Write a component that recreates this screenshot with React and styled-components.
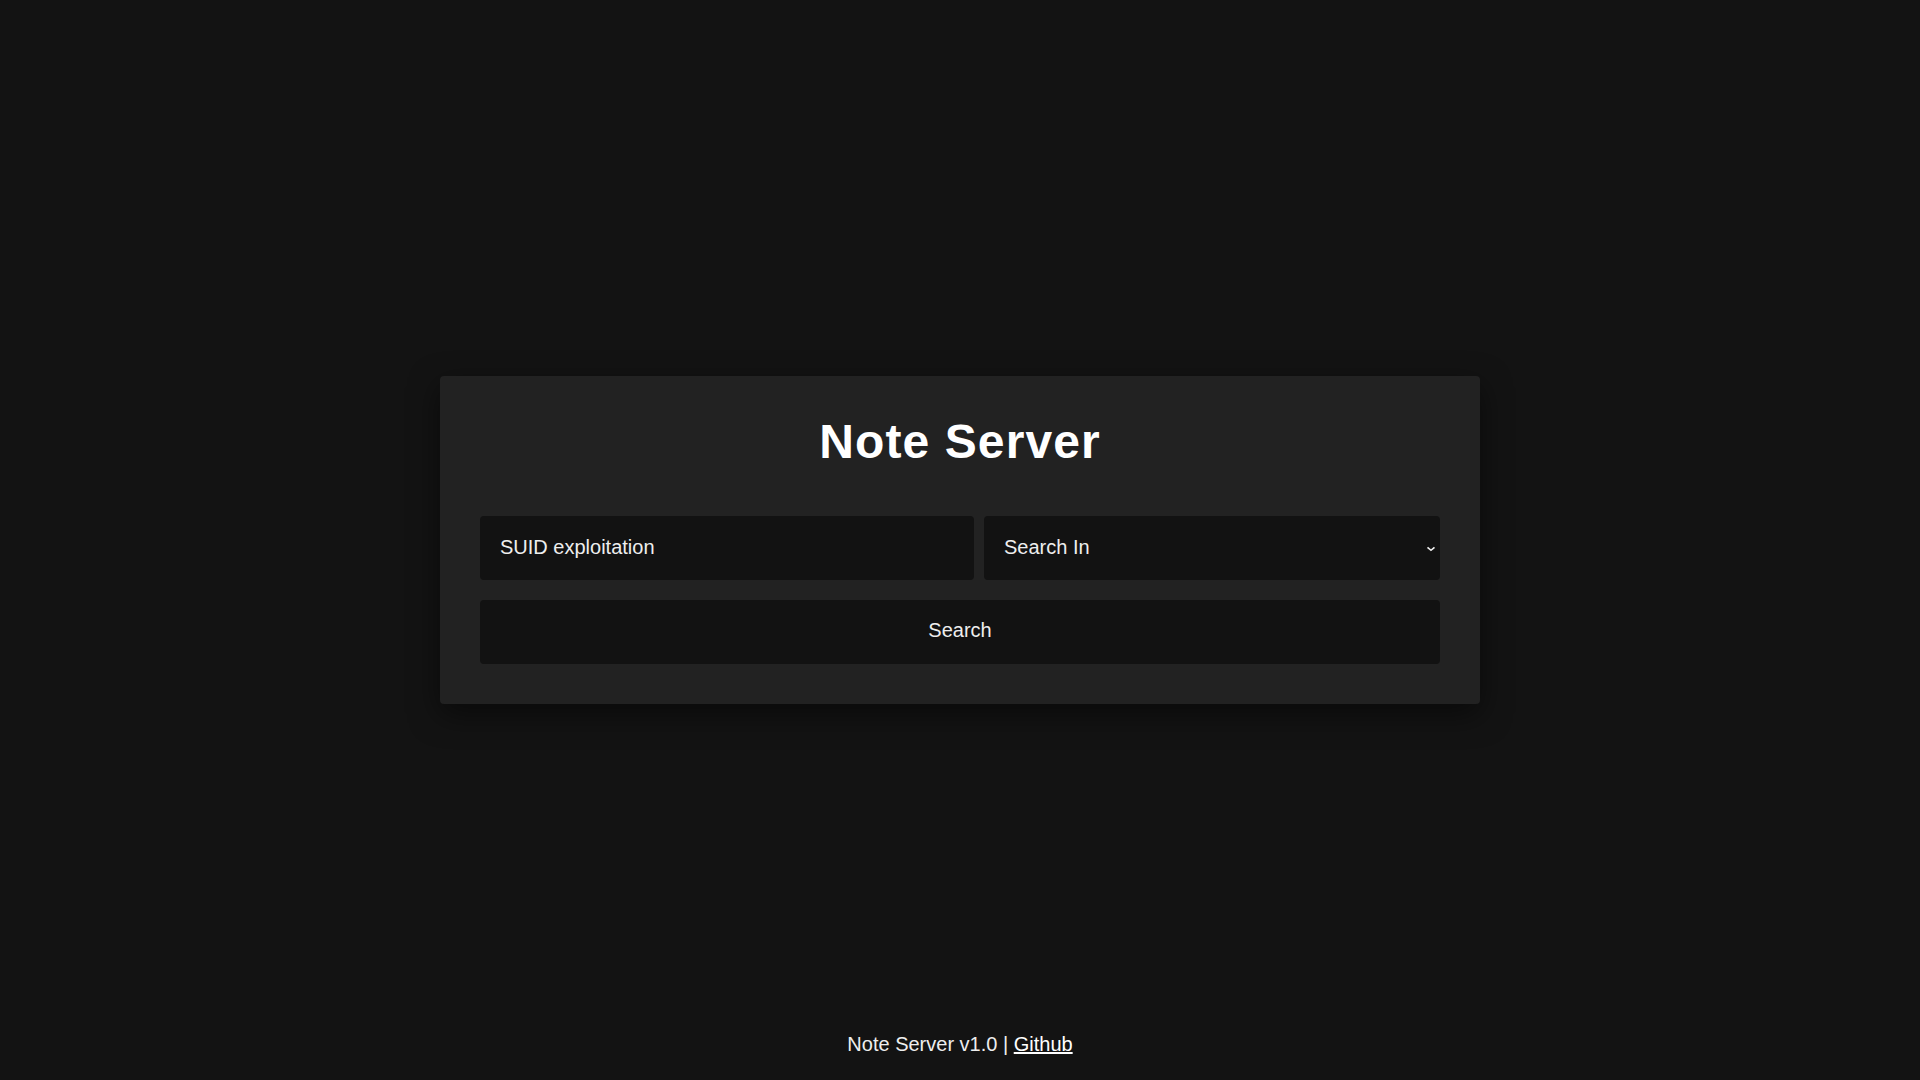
import React from "react";
import styled, { createGlobalStyle } from "styled-components";

const GlobalStyle = createGlobalStyle`
  html, body {
    margin: 0;
    padding: 0;
    background: #131313;
    color: #eeeeee;
    font-family: "Liberation Sans", Arial, Helvetica, sans-serif;
  }
  * { box-sizing: border-box; }
`;

const Page = styled.div`
  min-height: 100vh;
  display: grid;
  grid-template-rows: 1fr auto 1fr;
  justify-items: center;
`;

const Card = styled.main`
  grid-row: 2;
  width: 1040px;
  padding: 40px;
  background: #222222;
  border-radius: 4px;
  box-shadow: 0 10px 30px rgba(0, 0, 0, 0.5);
`;

const Title = styled.h1`
  margin: 2px 0 50px;
  font-size: 48px;
  line-height: 48px;
  font-weight: 700;
  letter-spacing: 1.1px;
  text-align: center;
  color: #ffffff;
`;

const Row = styled.div`
  display: flex;
  gap: 10px;
`;

const fieldBase = `
  height: 64px;
  border: none;
  border-radius: 4px;
  background: #121212;
  color: #eeeeee;
  font-family: "Liberation Sans", Arial, Helvetica, sans-serif;
  font-size: 20px;
  outline: none;
`;

const TextInput = styled.input`
  ${fieldBase}
  flex: 1;
  min-width: 0;
  padding: 0 20px 2px;
`;

const SelectWrap = styled.div`
  position: relative;
  width: 456px;
  flex: 0 0 456px;
`;

const Select = styled.select`
  ${fieldBase}
  width: 100%;
  padding: 0 30px 2px 20px;
  appearance: none;
  -webkit-appearance: none;
  cursor: pointer;
`;

const Chevron = styled.svg`
  position: absolute;
  right: 3px;
  top: 50%;
  transform: translateY(-40%);
  pointer-events: none;
`;

const SearchButton = styled.button`
  ${fieldBase}
  display: block;
  width: 100%;
  margin-top: 20px;
  padding: 0 0 4px;
  cursor: pointer;
  text-align: center;
`;

const Footer = styled.footer`
  grid-row: 3;
  align-self: end;
  padding-bottom: 24px;
  font-size: 20px;
  color: #eeeeee;
`;

const Link = styled.a`
  color: #ffffff;
  text-decoration: underline;
`;

export default function App() {
  return (
    <>
      <GlobalStyle />
      <Page>
        <Card>
          <Title>Note Server</Title>
          <Row>
            <TextInput type="text" defaultValue="SUID exploitation" />
            <SelectWrap>
              <Select defaultValue="">
                <option value="">Search In</option>
                <option value="title">Title</option>
                <option value="content">Content</option>
              </Select>
              <Chevron width="12" height="8" viewBox="0 0 12 8">
                <path d="M2.5 2.5 L6 5.5 L9.5 2.5" fill="none" stroke="#eeeeee" strokeWidth="1.6" />
              </Chevron>
            </SelectWrap>
          </Row>
          <SearchButton type="button">Search</SearchButton>
        </Card>
        <Footer>
          Note Server v1.0 | <Link href="#">Github</Link>
        </Footer>
      </Page>
    </>
  );
}
